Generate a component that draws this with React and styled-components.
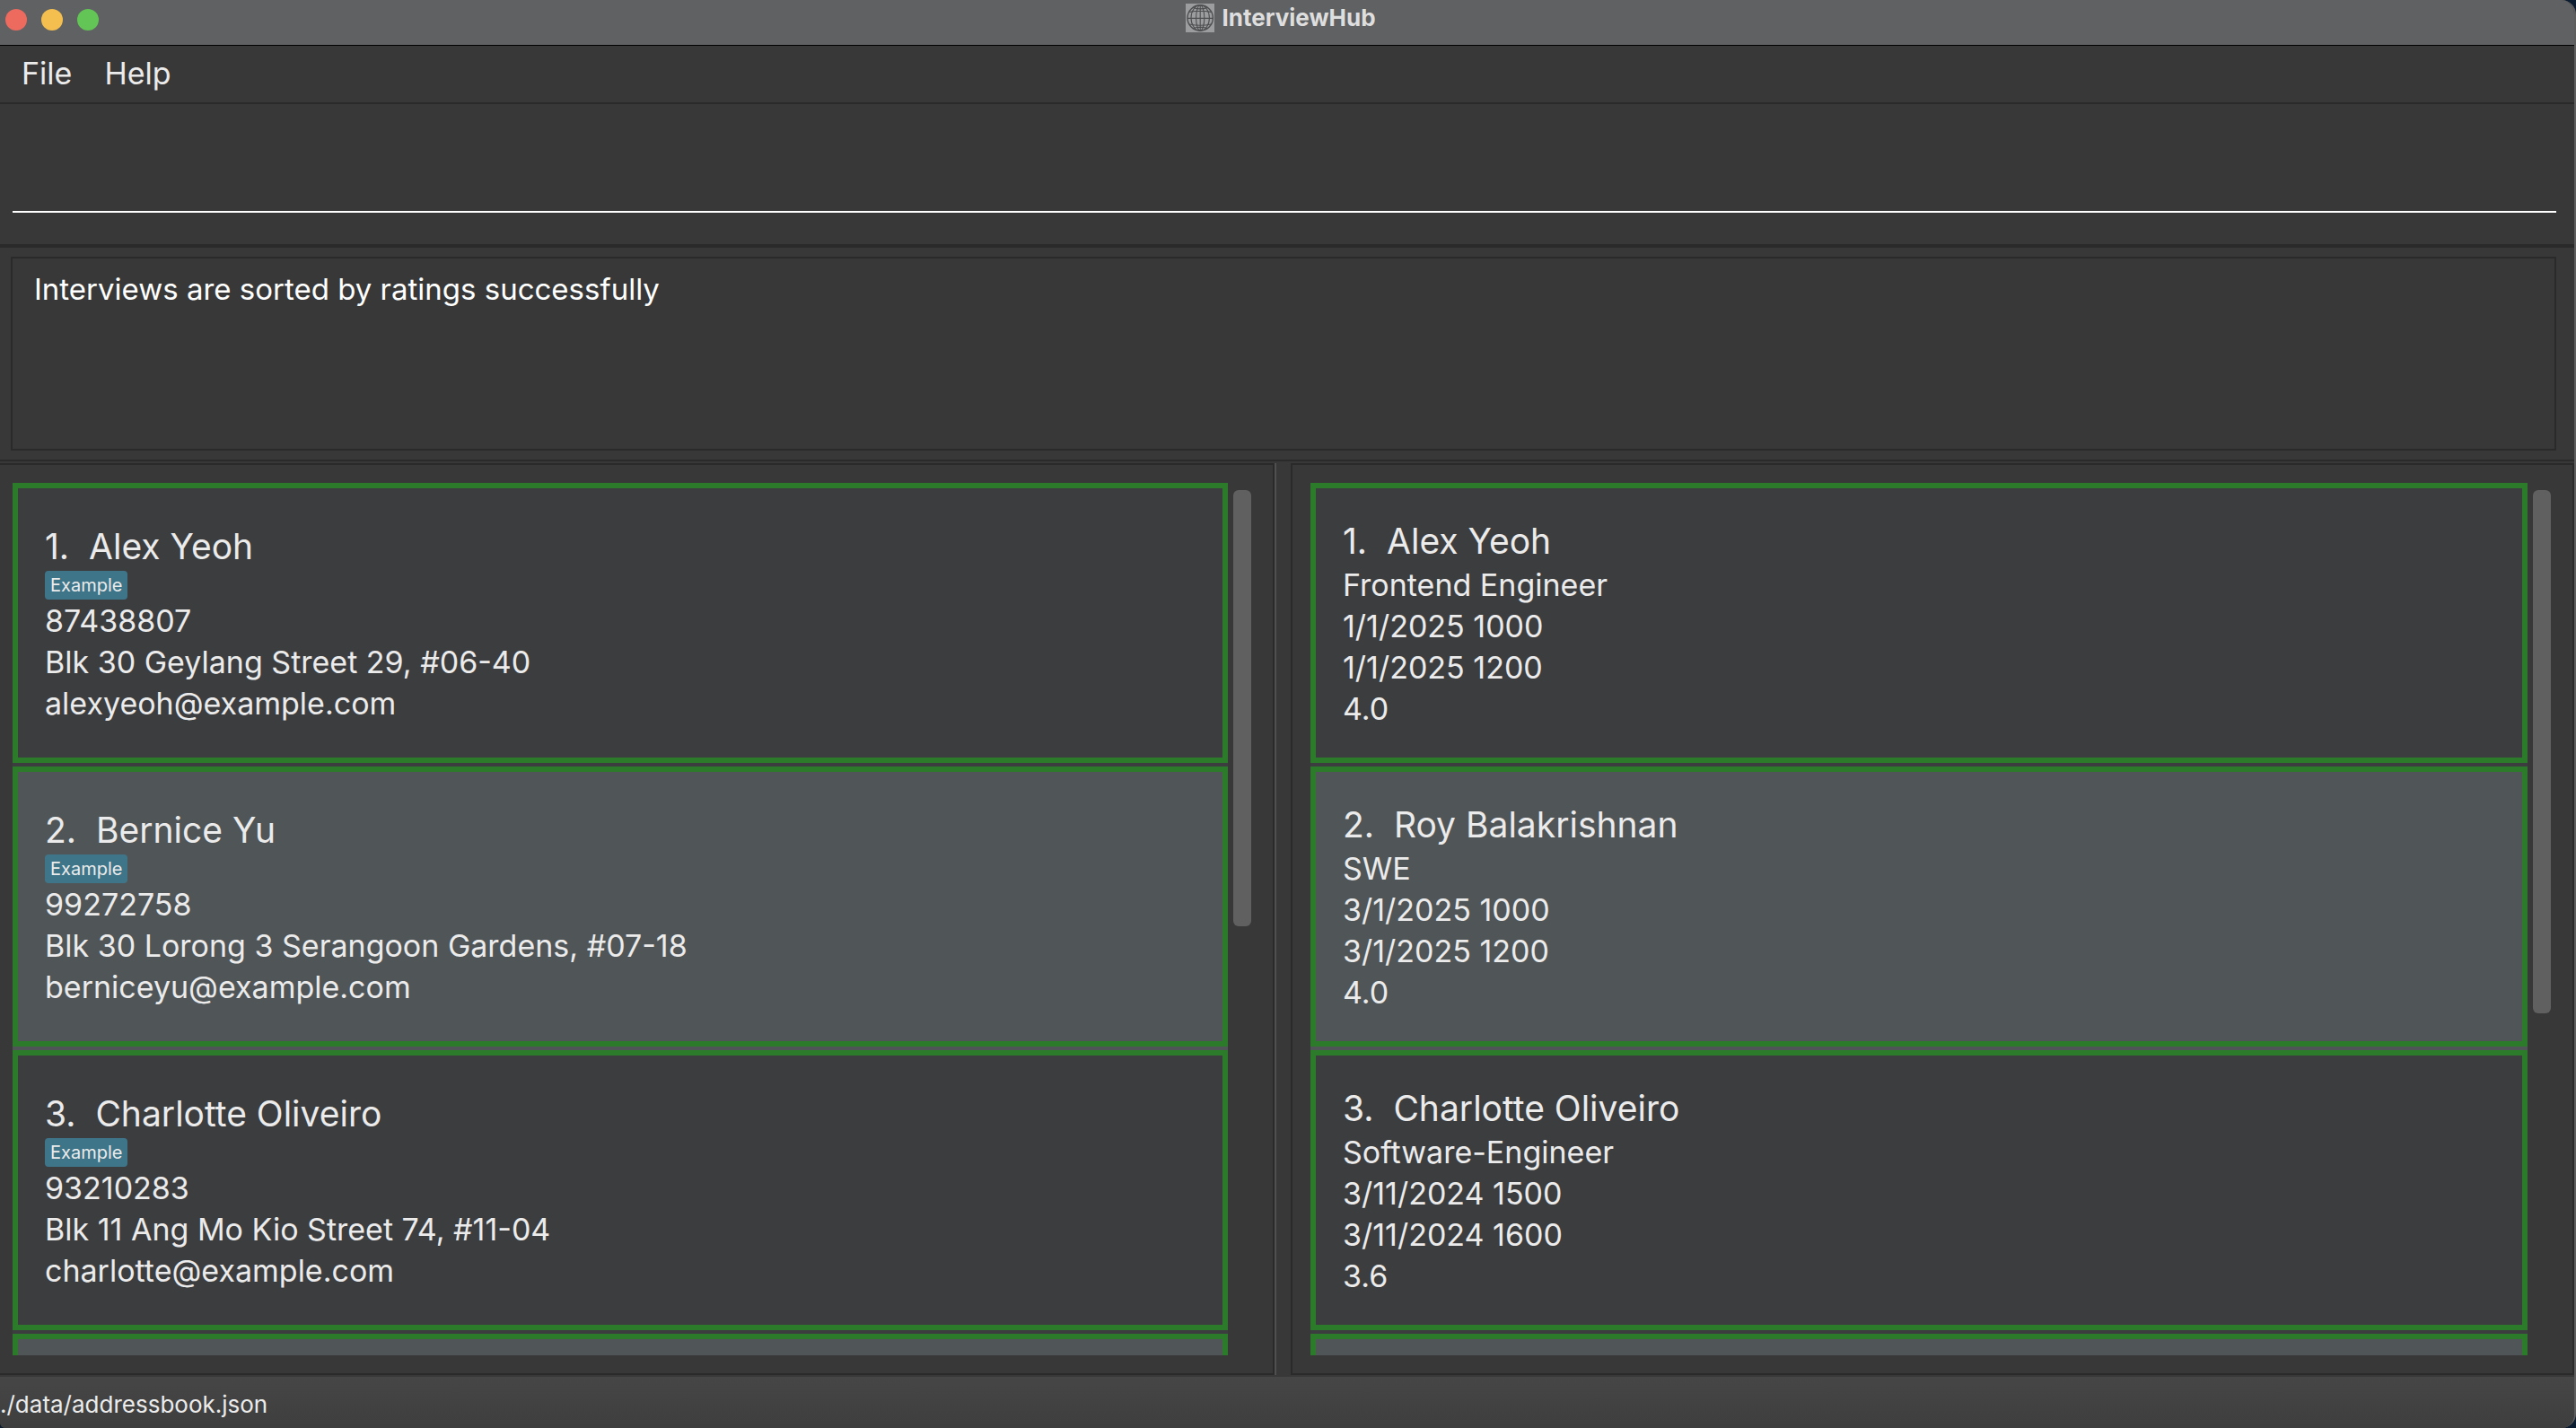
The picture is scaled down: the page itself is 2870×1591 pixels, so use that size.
import React from "react";
import styled, { createGlobalStyle } from "styled-components";

const color = {
  desktop: "#0b1c30",
  chrome: "#5f6162",
  edge: "#5e5e5e",
  base: "#383838",
  line: "#2a2a2a",
  divider: "#505050",
  cell: "#3c3d3f",
  cellAlt: "#505557",
  outline: "#2b7b2b",
  tag: "#3e7589",
  text: "#ebebeb",
  thumb: "#606060",
};

const GlobalStyle = createGlobalStyle`
  *, *::before, *::after { box-sizing: border-box; }
  body {
    margin: 0;
    background: ${color.desktop};
    color: ${color.text};
    font-family: Inter, "Liberation Sans", sans-serif;
  }
  h1, h2, p, ul, ol { margin: 0; padding: 0; font-weight: 400; list-style: none; }
`;

const Window = styled.div`
  display: flex;
  flex-direction: column;
  height: 100vh;
  overflow: hidden;
  background: ${color.base};
  border-right: 2px solid ${color.edge};
  border-radius: 0 16px 16px 6px;
`;

const TitleBar = styled.header`
  display: grid;
  grid-template-columns: 1fr auto 1fr;
  align-items: start;
  padding: 4px 20px 14px 6px;
  background: ${color.chrome};
  border-bottom: 1px solid #000;
`;

const WindowButtons = styled.div`
  display: flex;
  gap: 16px;
  padding-top: 6px;
`;

const WindowButton = styled.button`
  width: 24px;
  height: 24px;
  padding: 0;
  border: 0;
  border-radius: 50%;
  background: ${(p) => p.$fill};
`;

const Title = styled.h1`
  display: flex;
  align-items: center;
  gap: 8px;
  color: #dededf;
  font-size: 26px;
  font-weight: 700;
  line-height: 32px;
`;

const MenuBar = styled.nav`
  display: flex;
  padding: 8px 6px 9px;
  border-bottom: 2px solid ${color.line};
`;

const MenuButton = styled.button`
  padding: 0 18px;
  border: 0;
  background: none;
  color: ${color.text};
  font: inherit;
  font-size: 34px;
  line-height: 46px;
`;

const CommandArea = styled.form`
  display: flex;
  padding: 12px 20px 35px 14px;
  border-bottom: 4px solid ${color.line};
`;

const CommandField = styled.input`
  flex: 1;
  min-width: 0;
  height: 109px;
  padding: 0 8px;
  border: 0;
  border-bottom: 2px solid #fff;
  outline: none;
  background: transparent;
  color: #fff;
  font: inherit;
  font-size: 34px;
`;

const ResultArea = styled.section`
  padding: 10px 20px 10px 12px;
  border-bottom: 2px solid ${color.line};
`;

const ResultBox = styled.div`
  min-height: 216px;
  padding: 11px 24px;
  border: 2px solid ${color.line};
  color: #fff;
  font-size: 33px;
  line-height: 46px;
`;

const Panes = styled.main`
  display: grid;
  grid-template-columns: 1420fr 18px 1430fr;
  flex: 1;
  min-height: 0;
  padding: 2px 0;
`;

const Pane = styled.section`
  display: flex;
  gap: 6px;
  min-width: 0;
  min-height: 0;
  padding: 20px 24px 20px ${(p) => (p.$first ? "14px" : "20px")};
  border: 2px solid ${color.line};
  border-left-width: ${(p) => (p.$first ? "0" : "2px")};
`;

const Divider = styled.div`
  border-left: 2px solid ${color.divider};
`;

const List = styled.ol`
  flex: 1;
  min-width: 0;
  overflow: hidden;
`;

const Track = styled.div`
  display: flow-root;
  width: 20px;
`;

const Thumb = styled.div`
  height: ${(p) => p.$size};
  margin-top: 8px;
  border-radius: 6px;
  background: ${color.thumb};
`;

const Cell = styled.li`
  padding-bottom: 4px;
  background: ${color.cell};
  &:nth-child(even) { background: ${color.cellAlt}; }
`;

const Card = styled.article`
  display: flex;
  flex-direction: column;
  justify-content: center;
  min-height: 312px;
  padding: 2px 30px 0;
  border: 6px solid ${color.outline};
`;

const Name = styled.h2`
  font-size: 39px;
  line-height: 50px;
  white-space: pre;
`;

const Tags = styled.div`
  display: flex;
  gap: 6px;
  margin-top: 2px;
`;

const Tag = styled.span`
  padding: 0 6px;
  border-radius: 4px;
  background: ${color.tag};
  font-size: 20px;
  line-height: 32px;
`;

const Details = styled.div`
  margin-top: 1px;
  font-size: 34px;
  line-height: 46px;
`;

const StatusBar = styled.footer`
  padding: 9px 0 4px;
  background: linear-gradient(#464646, #3e3e3e);
  font-size: 26px;
  line-height: 44px;
`;

const applicants = [
  { name: "Alex Yeoh", tag: "Example", lines: ["87438807", "Blk 30 Geylang Street 29, #06-40", "alexyeoh@example.com"] },
  { name: "Bernice Yu", tag: "Example", lines: ["99272758", "Blk 30 Lorong 3 Serangoon Gardens, #07-18", "berniceyu@example.com"] },
  { name: "Charlotte Oliveiro", tag: "Example", lines: ["93210283", "Blk 11 Ang Mo Kio Street 74, #11-04", "charlotte@example.com"] },
];

const interviews = [
  { name: "Alex Yeoh", lines: ["Frontend Engineer", "1/1/2025 1000", "1/1/2025 1200", "4.0"] },
  { name: "Roy Balakrishnan", lines: ["SWE", "3/1/2025 1000", "3/1/2025 1200", "4.0"] },
  { name: "Charlotte Oliveiro", lines: ["Software-Engineer", "3/11/2024 1500", "3/11/2024 1600", "3.6"] },
];

function GlobeIcon() {
  return (
    <svg width="32" height="32" viewBox="0 0 32 32" fill="none" stroke="#4d4f50" strokeWidth="1.1" aria-hidden="true">
      <rect width="32" height="32" fill="#9b9d9e" stroke="none" />
      <circle cx="16.2" cy="16" r="14.2" strokeWidth="1.4" />
      <ellipse cx="16.2" cy="16" rx="10.2" ry="14.2" />
      <ellipse cx="16.2" cy="16" rx="4.6" ry="14.2" />
      <path d="M16.2 1.8v28.4M2 16.4h28.4M4.2 9.4q12 -2.4 24 0M4.2 23q12 2.4 24 0M8.4 4.4q7.8 3 15.6 0M8.4 27.6q7.8 -3 15.6 0" />
    </svg>
  );
}

function ListPane({ label, entries, thumb, first }) {
  return (
    <Pane $first={first} aria-label={label}>
      <List>
        {entries.map((entry, i) => (
          <Cell key={entry.name}>
            <Card>
              <Name>{`${i + 1}.  ${entry.name}`}</Name>
              {entry.tag && (
                <Tags>
                  <Tag>{entry.tag}</Tag>
                </Tags>
              )}
              <Details>
                {entry.lines.map((line) => (
                  <p key={line}>{line}</p>
                ))}
              </Details>
            </Card>
          </Cell>
        ))}
        <Cell>
          <Card />
        </Cell>
      </List>
      <Track>
        <Thumb $size={thumb} />
      </Track>
    </Pane>
  );
}

export default function App() {
  return (
    <>
      <GlobalStyle />
      <Window>
        <TitleBar>
          <WindowButtons>
            <WindowButton $fill="#ed6a5f" aria-label="Close" />
            <WindowButton $fill="#f5bf4f" aria-label="Minimize" />
            <WindowButton $fill="#62c555" aria-label="Zoom" />
          </WindowButtons>
          <Title>
            <GlobeIcon />
            InterviewHub
          </Title>
        </TitleBar>
        <MenuBar>
          <MenuButton>File</MenuButton>
          <MenuButton>Help</MenuButton>
        </MenuBar>
        <CommandArea>
          <CommandField type="text" aria-label="Command" />
        </CommandArea>
        <ResultArea>
          <ResultBox role="status">Interviews are sorted by ratings successfully</ResultBox>
        </ResultArea>
        <Panes>
          <ListPane label="Applicants" entries={applicants} thumb="50%" first />
          <Divider />
          <ListPane label="Interviews" entries={interviews} thumb="60%" />
        </Panes>
        <StatusBar>./data/addressbook.json</StatusBar>
      </Window>
    </>
  );
}
